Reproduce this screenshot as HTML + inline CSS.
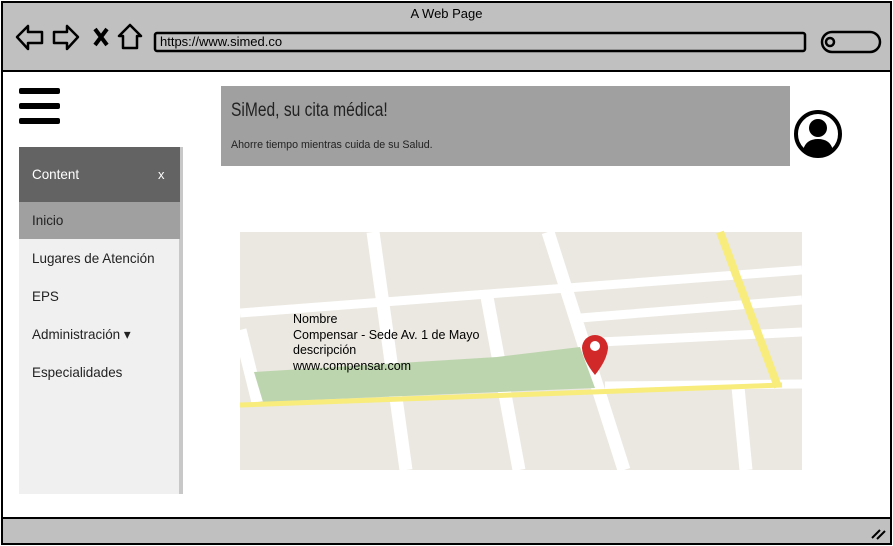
<!DOCTYPE html>
<html><head><meta charset="utf-8"><style>
*{margin:0;padding:0;box-sizing:border-box}
body{width:893px;height:546px;overflow:hidden;background:#fff;font-family:"Liberation Sans",sans-serif;position:relative}
.a{position:absolute}
.s{font-size:14px;color:#222;transform:scaleX(0.96);transform-origin:left top}
</style></head><body>
<div class="a" style="left:1px;top:1px;width:891px;height:544px;border:2px solid #000;background:#fff"></div>
<div class="a" style="left:3px;top:3px;width:887px;height:69px;background:#c0c0c0;border-bottom:2px solid #000"></div>
<div class="a" style="left:0;top:6px;width:893px;text-align:center;font-size:13px">A Web Page</div>
<svg class="a" style="left:0;top:0" width="893" height="546">
<g fill="none" stroke="#000" stroke-width="2.5" stroke-linejoin="round">
<path d="M17 37 L28 26 L28 32 L42 32 L42 43 L28 43 L28 49 Z"/>
<path d="M78 37 L67 26 L67 32 L54 32 L54 43 L67 43 L67 49 Z"/>
<path d="M130 25 L119 36 L123 36 L123 48 L137 48 L137 36 L141 36 Z"/>
<rect x="155" y="33" width="650" height="18" rx="2"/>
<rect x="822" y="32" width="58" height="20" rx="10"/>
<circle cx="830" cy="42" r="4"/>
</g>
<path d="M95 29 L107 45 M107 29 L95 45" stroke="#000" stroke-width="4"/>
<rect x="19" y="88" width="41" height="6" rx="2"/><rect x="19" y="103" width="41" height="6" rx="2"/><rect x="19" y="118" width="41" height="6" rx="2"/>
<circle cx="818" cy="134" r="22" fill="#fff" stroke="#000" stroke-width="4"/>
<circle cx="818" cy="128" r="9"/>
<path d="M803 150 Q806 139 818 139 Q830 139 833 150 Q826 156 818 156 Q810 156 803 150Z"/>
<rect x="240" y="232" width="562" height="238" fill="#ebe8e1"/>
<g stroke="#fff" stroke-width="9" fill="none">
<path d="M240 313 L802 270"/>
<path d="M580 318 L802 300"/>
<path d="M600 342 L802 332"/>
<path d="M605 386 L802 384"/>
</g>
<g stroke="#fff" stroke-width="13" fill="none">
<path d="M373 232 L406 470"/>
<path d="M548 232 L624 470"/>
<path d="M487 297 L519 470"/>
<path d="M240 330 L258 402"/>
<path d="M738 387 L746 470"/>
</g>
<polygon points="254,372 497,357 580,347 595,388 263,402" fill="#bdd5ae"/>
<path d="M240 405 L782 385" stroke="#f8ec7c" stroke-width="5"/>
<path d="M720 232 L778 387" stroke="#f8ec7c" stroke-width="8"/>
<path d="M595 375 Q583 360 582 348 A13 13 0 1 1 608 348 Q607 360 595 375Z" fill="#d1292a"/>
<circle cx="595" cy="346" r="5" fill="#fff"/>
</svg>
<div class="a" style="left:160px;top:34px;font-size:13px">https://www.simed.co</div>
<div class="a" style="left:221px;top:86px;width:569px;height:80px;background:#a0a0a0"></div>
<div class="a" style="left:231px;top:100px;font-size:19px;color:#222;transform:scaleX(0.82);transform-origin:left top">SiMed, su cita médica!</div>
<div class="a" style="left:231px;top:139px;font-size:11px;color:#222;transform:scaleX(0.97);transform-origin:left top">Ahorre tiempo mientras cuida de su Salud.</div>
<div class="a" style="left:19px;top:147px;width:164px;height:347px;background:#f0f0f0;border-right:4px solid #c8c8c8"></div>
<div class="a" style="left:19px;top:147px;width:161px;height:55px;background:#636363"></div>
<div class="a s" style="left:32px;top:166px;color:#fff">Content</div>
<div class="a" style="left:158px;top:167px;font-size:13px;color:#fff">x</div>
<div class="a" style="left:19px;top:202px;width:161px;height:37px;background:#a0a0a0"></div>
<div class="a s" style="left:32px;top:212px">Inicio</div>
<div class="a s" style="left:32px;top:250px">Lugares de Atención</div>
<div class="a s" style="left:32px;top:288px">EPS</div>
<div class="a s" style="left:32px;top:326px">Administración ▾</div>
<div class="a s" style="left:32px;top:364px">Especialidades</div>
<div class="a" style="left:293px;top:312px;font-size:12.5px;line-height:15.5px;color:#000">Nombre<br>Compensar - Sede Av. 1 de Mayo<br>descripción<br>www.compensar.com</div>
<div class="a" style="left:3px;top:517px;width:887px;height:26px;background:#c0c0c0;border-top:2px solid #000"></div>
<svg class="a" style="left:868px;top:524px" width="20" height="18"><path d="M4 14 L12 6 M9 15 L17 7" stroke="#000" stroke-width="2"/></svg>
</body></html>
